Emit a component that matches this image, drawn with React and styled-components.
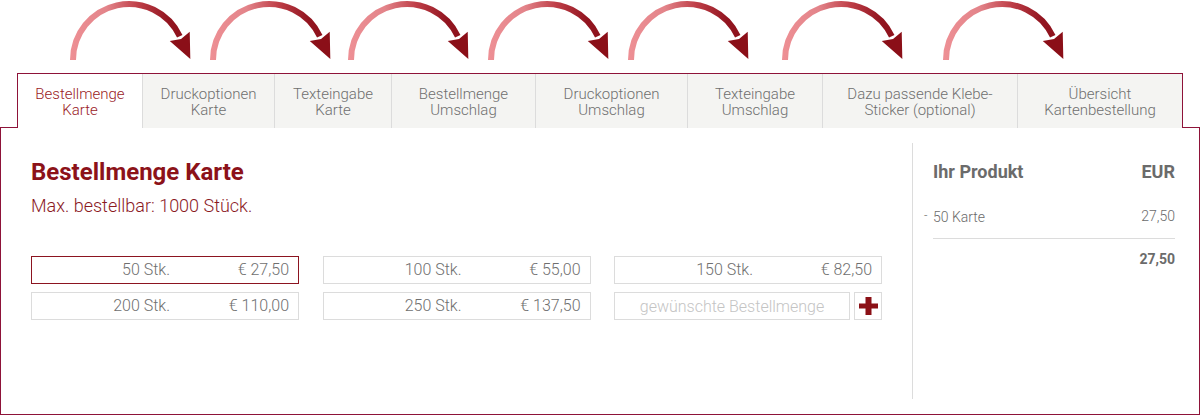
import React from "react";
import styled, { createGlobalStyle } from "styled-components";

const GlobalStyle = createGlobalStyle`
  html, body { margin: 0; padding: 0; background: #fff; }
  body { font-family: Roboto, "Liberation Sans", Arial, sans-serif; width: 1200px; height: 415px; overflow: hidden; }
  * { box-sizing: border-box; }
`;

const BURGUNDY = "#8e1339";
const RED = "#8c1219";

const Page = styled.div`
  width: 1200px;
  height: 415px;
  display: flex;
  flex-direction: column;
`;

const ArrowRow = styled.div`
  height: 73px;
  display: flex;
  align-items: flex-start;
`;

const ArrowSvg = styled.svg`
  flex: none;
  display: block;
  margin-left: ${(p) => p.$offset}px;
`;

const TabBar = styled.div`
  margin-left: 17px;
  width: 1166px;
  border: 1px solid ${BURGUNDY};
  border-bottom: none;
  display: flex;
  position: relative;
  z-index: 1;
  margin-bottom: -1px;
`;

const Tab = styled.div`
  width: ${(p) => p.$w}px;
  height: 54px;
  flex: none;
  display: flex;
  align-items: center;
  justify-content: center;
  text-align: center;
  padding-top: 2px;
  font-size: 15px;
  font-weight: 300;
  line-height: 16px;
  background: ${(p) => (p.$active ? "#fff" : "#f4f4f2")};
  color: ${(p) => (p.$active ? "#9a1a1f" : "#6f6f6f")};
  border-left: ${(p) => (p.$first ? "none" : "1px solid #dcdcdc")};
`;

const ContentBox = styled.div`
  height: 288px;
  border: 1px solid ${BURGUNDY};
  display: flex;
`;

const MainArea = styled.div`
  flex: 1;
  padding: 30px 30px 0 30px;
`;

const Heading = styled.h2`
  margin: 0;
  font-size: 24px;
  line-height: 28px;
  font-weight: 700;
  color: ${RED};
`;

const SubLine = styled.p`
  margin: 9px 0 0 0;
  font-size: 18px;
  font-weight: 300;
  line-height: 22px;
  color: #8b1a1f;
`;

const OptionGrid = styled.div`
  margin-top: 39px;
  display: grid;
  grid-template-columns: repeat(3, 268px);
  column-gap: 23.5px;
  row-gap: 8px;
`;

const Option = styled.div`
  height: 28px;
  border: 1px solid ${(p) => (p.$selected ? "#8c1420" : "#dcdcdc")};
  display: flex;
  align-items: center;
  font-size: 16px;
  font-weight: 300;
  line-height: 26px;
  color: #6f6f6f;
`;

const Qty = styled.span`
  width: 138px;
  text-align: right;
`;

const Price = styled.span`
  flex: 1;
  text-align: right;
  padding-right: 9px;
`;

const CustomRow = styled.div`
  display: flex;
  gap: 4px;
`;

const QtyInput = styled.input`
  flex: 1;
  min-width: 0;
  height: 28px;
  border: 1px solid #dcdcdc;
  font-family: Roboto, "Liberation Sans", Arial, sans-serif;
  font-size: 16px;
  font-weight: 300;
  text-align: center;
  color: #6f6f6f;
  padding: 0;
  outline: none;
  &::placeholder { color: #c4c4c4; }
`;

const AddButton = styled.button`
  width: 28px;
  height: 28px;
  flex: none;
  border: 1px solid #dcdcdc;
  background: #fff;
  padding: 0;
  display: flex;
  align-items: center;
  justify-content: center;
`;

const SidePanel = styled.div`
  width: 287px;
  flex: none;
  margin: 15px 0 15px 0;
  border-left: 1px solid #dcdcdc;
  padding: 18px 24px 0 20px;
  color: #6b6b6b;
`;

const PanelRow = styled.div`
  display: flex;
  justify-content: space-between;
`;

const PanelHead = styled(PanelRow)`
  font-size: 18px;
  font-weight: 700;
  line-height: 21px;
`;

const ItemRow = styled(PanelRow)`
  margin-top: 24px;
  font-size: 14px;
  font-weight: 300;
  line-height: 20px;
  color: #6b6b6b;
  padding-bottom: 11px;
  border-bottom: 1px solid #dcdcdc;
`;

const ItemName = styled.span`
  &::before {
    content: "-";
    display: inline-block;
    width: 9px;
    margin-left: -9px;
    font-size: 12px;
    vertical-align: 2px;
  }
`;

const TotalRow = styled(PanelRow)`
  justify-content: flex-end;
  margin-top: 10px;
  font-size: 14px;
  line-height: 20px;
  font-weight: 700;
  color: #6b6b6b;
`;

function Arrow({ offset, id }) {
  const a = (25 * Math.PI) / 180;
  const cx = 60, cy = 60, r = 56;
  const ex = cx + r * Math.cos(a);
  const ey = cy - r * Math.sin(a);
  const dx = Math.sin(a), dy = Math.cos(a);
  const px = Math.cos(a), py = -Math.sin(a);
  const hw = 11;
  const p1 = [ex - hw * px, ey - hw * py];
  const p2 = [ex + hw * px, ey + hw * py];
  const notch = [ex + 3 * dx, ey + 3 * dy];
  const tip = [ex + 25 * dx, ey + 25 * dy];
  const pts = [p1, notch, p2, tip].map((p) => p.map((v) => v.toFixed(2)).join(",")).join(" ");
  return (
    <ArrowSvg $offset={offset} width="125" height="62" viewBox="0 0 125 62">
      <defs>
        <linearGradient id={id} gradientUnits="userSpaceOnUse" x1="0" y1="0" x2="125" y2="0">
          <stop offset="0" stopColor="#ee9095" />
          <stop offset="0.3" stopColor="#e3848a" />
          <stop offset="0.55" stopColor="#bf3f48" />
          <stop offset="0.8" stopColor="#921520" />
          <stop offset="1" stopColor="#8b0f18" />
        </linearGradient>
      </defs>
      <path
        d={`M${cx - r} 60 A${r} ${r} 0 0 1 ${ex.toFixed(2)} ${ey.toFixed(2)}`}
        fill="none"
        stroke={`url(#${id})`}
        strokeWidth="6"
      />
      <polygon points={pts} fill="#8b0f18" />
    </ArrowSvg>
  );
}

const arrowOffsets = [69, 15, 13, 15, 15, 29, 36];

const tabs = [
  { w: 124, l1: "Bestellmenge", l2: "Karte" },
  { w: 132, l1: "Druckoptionen", l2: "Karte" },
  { w: 117, l1: "Texteingabe", l2: "Karte" },
  { w: 144, l1: "Bestellmenge", l2: "Umschlag" },
  { w: 152, l1: "Druckoptionen", l2: "Umschlag" },
  { w: 135, l1: "Texteingabe", l2: "Umschlag" },
  { w: 195, l1: "Dazu passende Klebe-", l2: "Sticker (optional)" },
  { w: 165, l1: "Übersicht", l2: "Kartenbestellung" },
];

const options = [
  { q: "50 Stk.", p: "€ 27,50", sel: true },
  { q: "100 Stk.", p: "€ 55,00" },
  { q: "150 Stk.", p: "€ 82,50" },
  { q: "200 Stk.", p: "€ 110,00" },
  { q: "250 Stk.", p: "€ 137,50" },
];

export default function App() {
  return (
    <Page>
      <GlobalStyle />
      <ArrowRow>
        {arrowOffsets.map((o, i) => (
          <Arrow key={i} offset={o} id={`arrowGrad${i}`} />
        ))}
      </ArrowRow>
      <TabBar>
        {tabs.map((t, i) => (
          <Tab key={i} $w={t.w} $active={i === 0} $first={i === 0}>
            <span>
              {t.l1}
              <br />
              {t.l2}
            </span>
          </Tab>
        ))}
      </TabBar>
      <ContentBox>
        <MainArea>
          <Heading>Bestellmenge Karte</Heading>
          <SubLine>Max. bestellbar: 1000 Stück.</SubLine>
          <OptionGrid>
            {options.map((o, i) => (
              <Option key={i} $selected={o.sel}>
                <Qty>{o.q}</Qty>
                <Price>{o.p}</Price>
              </Option>
            ))}
            <CustomRow>
              <QtyInput placeholder="gewünschte Bestellmenge" />
              <AddButton aria-label="hinzufügen">
                <svg width="19" height="18" viewBox="0 0 19 18">
                  <rect x="0" y="6.5" width="19" height="5" fill="#8b1016" />
                  <rect x="6.5" y="0" width="6" height="18" fill="#8b1016" />
                </svg>
              </AddButton>
            </CustomRow>
          </OptionGrid>
        </MainArea>
        <SidePanel>
          <PanelHead>
            <span>Ihr Produkt</span>
            <span>EUR</span>
          </PanelHead>
          <ItemRow>
            <ItemName>50 Karte</ItemName>
            <span>27,50</span>
          </ItemRow>
          <TotalRow>
            <span>27,50</span>
          </TotalRow>
        </SidePanel>
      </ContentBox>
    </Page>
  );
}
